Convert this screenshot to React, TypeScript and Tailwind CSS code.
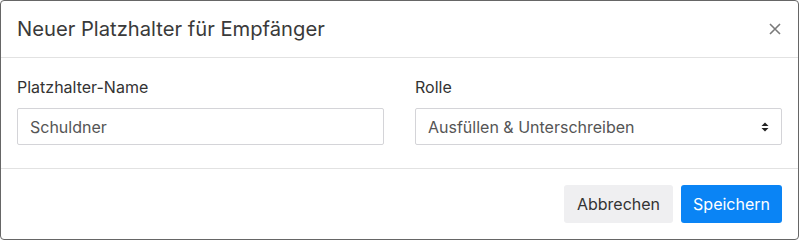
export default function App() {
  return (
    <div
      className="w-[799px] h-[240px] bg-white border border-[#666] rounded-[4px] flex flex-col text-[#333]"
      style={{ fontFamily: "Inter, 'Noto Sans', sans-serif" }}
    >
      {/* header */}
      <div className="h-[57px] shrink-0 flex items-center justify-between pl-4 pr-[13px] border-b border-[#e2e2e2]">
        <h2 className="text-[20.2px] leading-none text-[#3a3a3a]">Neuer Platzhalter für Empfänger</h2>
        <button className="w-[20px] h-[20px] flex items-center justify-center text-[#7a7a7a]">
          <svg width="12" height="12" viewBox="0 0 12 12" fill="none" stroke="currentColor" strokeWidth="1.6">
            <path d="M1 1 L11 11 M11 1 L1 11" />
          </svg>
        </button>
      </div>

      {/* body */}
      <div className="h-[111px] shrink-0 grid grid-cols-2 gap-[31px] px-4 pt-[20px] border-b border-[#e2e2e2]">
        <div className="flex flex-col">
          <label className="text-[16px] leading-[19px] text-[#333] mb-[11px]">Platzhalter-Name</label>
          <input
            className="h-[37px] border border-[#d4d4d8] rounded-[2px] px-3 text-[16px] text-[#555] outline-none"
            defaultValue="Schuldner"
          />
        </div>
        <div className="flex flex-col">
          <label className="text-[16px] leading-[19px] text-[#333] mb-[11px]">Rolle</label>
          <div className="h-[37px] border border-[#d4d4d8] rounded-[2px] pl-3 pr-3 flex items-center justify-between text-[16px] text-[#555]">
            <span>Ausfüllen &amp; Unterschreiben</span>
            <svg width="8" height="10" viewBox="0 0 8 10" className="text-[#222]" fill="currentColor">
              <path d="M4 0.5 L7.5 4 L0.5 4 Z" />
              <path d="M4 9.5 L7.5 6 L0.5 6 Z" />
            </svg>
          </div>
        </div>
      </div>

      {/* footer */}
      <div className="flex-1 flex items-center justify-end gap-2 px-4">
        <button className="h-[38px] px-[13px] rounded-[3px] bg-[#efeff1] text-[16px] text-[#333]">Abbrechen</button>
        <button className="h-[38px] px-[12px] rounded-[3px] bg-[#0a84f5] text-[16px] text-white">Speichern</button>
      </div>
    </div>
  );
}
